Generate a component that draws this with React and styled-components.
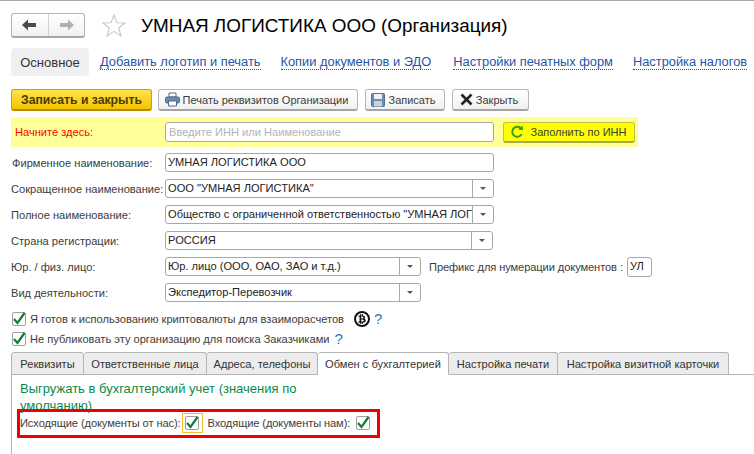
import React from "react";
import styled, { createGlobalStyle } from "styled-components";
import { FaBtc } from "react-icons/fa";

const Global = createGlobalStyle`
  html, body { margin: 0; padding: 0; background: #fff; }
  body { width: 754px; height: 454px; overflow: hidden; font-family: "Liberation Sans", Arial, sans-serif; font-size: 11.1px; color: #3c3c3c; }
  * { box-sizing: border-box; }
`;

const Page = styled.div`
  position: relative;
  width: 754px;
  height: 454px;
  overflow: hidden;
  border-top: 1px solid #a8a8a8;
  padding: 12px 0 0 11px;
`;

const Header = styled.header`
  display: flex;
  align-items: center;
  height: 25px;
`;

const NavGroup = styled.div`
  display: flex;
  width: 74px;
  height: 25px;
  border: 1px solid #b4b4b4;
  border-bottom: 2px solid #a6a6a6;
  border-radius: 3px;
  background: linear-gradient(#fff, #f1f1f1);
`;

const NavButton = styled.div`
  flex: 1;
  display: flex;
  align-items: center;
  justify-content: center;
  & + & { border-left: 1px solid #d2d2d2; }
`;

const StarSlot = styled.div`
  display: flex;
  margin: 0 15px 0 17px;
`;

const Title = styled.h1`
  margin: 0;
  font-size: 18.9px;
  font-weight: 400;
  color: #000;
  white-space: nowrap;
  line-height: 25px;
`;

const Sections = styled.nav`
  display: flex;
  align-items: center;
  margin-top: 10px;
  height: 28px;
  width: 760px;
`;

const CurrentSection = styled.div`
  flex: none;
  width: 78px;
  height: 28px;
  display: flex;
  align-items: center;
  justify-content: center;
  background: #f0f0f0;
  border-radius: 4px;
  font-size: 13px;
  color: #333;
  margin-right: 11px;
`;

const SectionLink = styled.a`
  flex: none;
  font-size: 12.85px;
  color: #1f55a8;
  white-space: nowrap;
  border-bottom: 1px dotted #1f55a8;
  line-height: 14px;
  margin-right: ${(p) => p.$mr || 20}px;
`;

const Toolbar = styled.div`
  display: flex;
  gap: 6px;
  margin-top: 13px;
  height: 22px;
`;

const ToolButton = styled.button`
  display: flex;
  align-items: center;
  justify-content: center;
  gap: 3px;
  width: ${(p) => p.$w}px;
  height: 22px;
  margin-left: ${(p) => p.$ml || 0}px;
  padding: 0 3px 0 0;
  font-family: inherit;
  font-size: 11px;
  color: #3c3c3c;
  border: 1px solid #b8b8b8;
  border-bottom: 2px solid #a4a4a4;
  border-radius: 3px;
  background: linear-gradient(#fff, #f1f1f1);
  white-space: nowrap;
`;

const PrimaryButton = styled(ToolButton)`
  padding: 0;
  font-size: 12.2px;
  font-weight: 700;
  color: #4a3c00;
  border-color: #c9a400;
  border-bottom-color: #b08e00;
  background: linear-gradient(#ffe24d, #f5c400);
`;

const StartBand = styled.div`
  display: flex;
  align-items: center;
  width: 627px;
  height: 30px;
  margin-top: 6px;
  padding-left: 4px;
  background: #ffff99;
`;

const StartLabel = styled.span`
  width: 150px;
  color: #ff0000;
`;

const Hint = styled.div`
  display: flex;
  align-items: center;
  width: 329px;
  height: 20px;
  padding-left: 3px;
  background: #fff;
  border: 1px solid #a8a8a8;
  border-radius: 3px;
  color: #b4b4b4;
`;

const FillButton = styled.button`
  display: flex;
  align-items: center;
  justify-content: center;
  gap: 7px;
  width: 132px;
  height: 21px;
  margin-left: 9px;
  padding: 0 2px 0 0;
  font-family: inherit;
  font-size: 11px;
  color: #3c3c3c;
  background: #ffff00;
  border: 1px solid #c2c24a;
  border-bottom: 2px solid #a8a850;
  border-radius: 3px;
`;

const Form = styled.div`
  display: flex;
  flex-direction: column;
  gap: 7px;
  margin-top: 6px;
`;

const Row = styled.div`
  display: flex;
  align-items: center;
  height: 19px;
`;

const Label = styled.label`
  flex: none;
  width: 154px;
  white-space: nowrap;
  padding-left: ${(p) => p.$inset || 0}px;
`;

const Field = styled.div`
  display: flex;
  flex: none;
  width: ${(p) => p.$w}px;
  height: ${(p) => p.$h || 19}px;
  border: 1px solid #a8a8a8;
  border-radius: 3px;
  background: #fff;
  overflow: hidden;
`;

const FieldText = styled.div`
  flex: 1;
  min-width: 0;
  padding-left: 2px;
  line-height: 17px;
  color: #222;
  white-space: nowrap;
  overflow: hidden;
`;

const Drop = styled.div`
  flex: none;
  width: 21px;
  display: flex;
  align-items: center;
  justify-content: center;
  border-left: 1px solid #a8a8a8;
  &::after {
    content: "";
    border-left: 3px solid transparent;
    border-right: 3px solid transparent;
    border-top: 3px solid #555;
  }
`;

const PrefixLabel = styled.span`
  margin-left: 8px;
  margin-right: 4px;
  white-space: nowrap;
  letter-spacing: -0.09px;
`;

const Checks = styled.div`
  display: flex;
  flex-direction: column;
  gap: 5px;
  margin-top: 9px;
`;

const CheckRow = styled.div`
  display: flex;
  align-items: center;
  height: 15px;
  padding-left: 1px;
`;

const CheckText = styled.span`
  margin-left: 4px;
  white-space: nowrap;
`;

const Box = styled.span`
  display: flex;
  width: 14px;
  height: 14px;
  flex: none;
  align-items: center;
  justify-content: center;
  border: 1px solid #a0a0a0;
  border-radius: 2px;
  background: #fff;
  & svg { flex: none; }
`;

const Coin = styled.span`
  display: flex;
  align-items: center;
  justify-content: center;
  width: 16px;
  height: 16px;
  margin-left: 10px;
  border: 2px solid #111;
  border-radius: 50%;
  color: #111;
  font-size: 10px;
`;

const Help = styled.span`
  margin-left: ${(p) => p.$ml}px;
  font-size: 15px;
  color: #1a7fc0;
`;

const TabStrip = styled.div`
  display: flex;
  height: 23px;
  margin-top: 6px;
  border-bottom: 1px solid #b4b4b4;
`;

const Tab = styled.div`
  display: flex;
  flex: none;
  align-items: center;
  justify-content: center;
  width: ${(p) => p.$w}px;
  height: 23px;
  white-space: nowrap;
  border: 1px solid #b4b4b4;
  border-left-width: ${(p) => (p.$first ? 1 : 0)}px;
  border-bottom-color: ${(p) => (p.$active ? "#fff" : "#b4b4b4")};
  border-radius: 3px 3px 0 0;
  background: ${(p) => (p.$active ? "#fff" : "#ececec")};
  color: #333;
`;

const TabBody = styled.section`
  height: 80px;
  padding: 5px 0 0 8px;
  border-left: 1px solid #b4b4b4;
`;

const Heading = styled.h2`
  margin: 0;
  width: 300px;
  height: 28px;
  font-size: 13px;
  line-height: 17px;
  font-weight: 400;
  color: #0a8a4a;
`;

const ExportRow = styled.div`
  display: flex;
  align-items: center;
  height: 20px;
  margin-top: 5px;
`;

const ExportLabel = styled.span`
  white-space: nowrap;
  letter-spacing: -0.1px;
`;

const FocusFrame = styled.span`
  display: flex;
  align-items: center;
  justify-content: center;
  width: 21px;
  height: 20px;
  margin: 0 5px 0 1px;
  border: 1px solid #f2c230;
`;

const ExportBox = styled(Box)`
  margin-left: 6px;
`;

const Highlight = styled.div`
  position: absolute;
  left: 17px;
  top: 408px;
  width: 363px;
  height: 29px;
  border: 3px solid #f00000;
  pointer-events: none;
`;

const Check = () => (
  <svg width="14" height="14" viewBox="0 0 14 14">
    <path d="M2 7 L5.5 11 L12.5 1" fill="none" stroke="#12803c" strokeWidth="2.3" />
  </svg>
);

const ArrowLeft = () => (
  <svg width="15" height="12" viewBox="0 0 15 12">
    <path d="M0 6 L6 0.5 V4 H14 V8 H6 V11.5 Z" fill="#4a4a4a" />
  </svg>
);

const ArrowRight = () => (
  <svg width="15" height="12" viewBox="0 0 15 12">
    <path d="M15 6 L9 0.5 V4 H1 V8 H9 V11.5 Z" fill="#b0b0b0" />
  </svg>
);

const Star = () => (
  <svg width="24" height="23" viewBox="0 0 24 23">
    <path d="M12 1 L15 8.7 L23 9 L16.7 14 L19 22 L12 17.4 L5 22 L7.3 14 L1 9 L9 8.7 Z" fill="#fff" stroke="#c4c8cc" strokeWidth="1.1" />
  </svg>
);

const Printer = () => (
  <svg width="15" height="15" viewBox="0 0 15 15">
    <path d="M4 1 H11 V5 H4 Z" fill="#fff" stroke="#5d6f85" />
    <rect x="0.5" y="5" width="14" height="6" rx="1.5" fill="#6d8bab" stroke="#4d6a88" />
    <path d="M3.5 9 H11.5 V14 H3.5 Z" fill="#fff" stroke="#4d6a88" />
  </svg>
);

const Floppy = () => (
  <svg width="14" height="14" viewBox="0 0 14 14">
    <rect x="0.5" y="0.5" width="13" height="13" rx="1" fill="#6f8db0" stroke="#54708f" />
    <rect x="3" y="1" width="8" height="5" fill="#eef2f6" />
    <rect x="3" y="8" width="8" height="5.5" fill="#c9d3de" />
  </svg>
);

const Cross = () => (
  <svg width="13" height="13" viewBox="0 0 13 13">
    <path d="M1.5 1.5 L11.5 11.5 M11.5 1.5 L1.5 11.5" stroke="#222" strokeWidth="2.6" />
  </svg>
);

const Refresh = () => (
  <svg width="14" height="14" viewBox="0 0 14 14">
    <path d="M11.6 9.2 A5 5 0 1 1 10.5 3" fill="none" stroke="#3c9a1e" strokeWidth="2" />
    <path d="M8 4.6 L13 5.2 L12.6 0.4 Z" fill="#3c9a1e" />
  </svg>
);

const rows = [
  { label: "Фирменное наименование:", value: "УМНАЯ ЛОГИСТИКА ООО", w: 329, inset: 1 },
  { label: "Сокращенное наименование:", value: 'ООО "УМНАЯ ЛОГИСТИКА"', w: 329, drop: true },
  { label: "Полное наименование:", value: 'Общество с ограниченной ответственностью "УМНАЯ ЛОГИСТИКА"', w: 329, drop: true },
  { label: "Страна регистрации:", value: "РОССИЯ", w: 328, drop: true },
  { label: "Юр. / физ. лицо:", value: "Юр. лицо (ООО, ОАО, ЗАО и т.д.)", w: 256, drop: true, prefix: true },
  { label: "Вид деятельности:", value: "Экспедитор-Перевозчик", w: 256, drop: true },
];

const tabs = [
  ["Реквизиты", 73],
  ["Ответственные лица", 123],
  ["Адреса, телефоны", 111],
  ["Обмен с бухгалтерией", 131],
  ["Настройка печати", 109],
  ["Настройка визитной карточки", 171],
];

export default function App() {
  return (
    <>
      <Global />
      <Page>
        <Header>
          <NavGroup>
            <NavButton><ArrowLeft /></NavButton>
            <NavButton><ArrowRight /></NavButton>
          </NavGroup>
          <StarSlot><Star /></StarSlot>
          <Title>УМНАЯ ЛОГИСТИКА ООО (Организация)</Title>
        </Header>

        <Sections>
          <CurrentSection>Основное</CurrentSection>
          <SectionLink>Добавить логотип и печать</SectionLink>
          <SectionLink $mr={22}>Копии документов и ЭДО</SectionLink>
          <SectionLink>Настройки печатных форм</SectionLink>
          <SectionLink>Настройка налогов</SectionLink>
        </Sections>

        <Toolbar>
          <PrimaryButton $w={141}>Записать и закрыть</PrimaryButton>
          <ToolButton $w={200}><Printer />Печать реквизитов Организации</ToolButton>
          <ToolButton $w={80} $ml={1}><Floppy />Записать</ToolButton>
          <ToolButton $w={77} $ml={1}><Cross />Закрыть</ToolButton>
        </Toolbar>

        <StartBand>
          <StartLabel>Начните здесь:</StartLabel>
          <Hint>Введите ИНН или Наименование</Hint>
          <FillButton><Refresh />Заполнить по ИНН</FillButton>
        </StartBand>

        <Form>
          {rows.map((r) => (
            <Row key={r.label}>
              <Label $inset={r.inset}>{r.label}</Label>
              <Field $w={r.w}>
                <FieldText>{r.value}</FieldText>
                {r.drop && <Drop />}
              </Field>
              {r.prefix && (
                <>
                  <PrefixLabel>Префикс для нумерации документов :</PrefixLabel>
                  <Field $w={25} $h={20}><FieldText>УЛ</FieldText></Field>
                </>
              )}
            </Row>
          ))}
        </Form>

        <Checks>
          <CheckRow>
            <Box><Check /></Box>
            <CheckText>Я готов к использованию криптовалюты для взаиморасчетов</CheckText>
            <Coin><FaBtc /></Coin>
            <Help $ml={4}>?</Help>
          </CheckRow>
          <CheckRow>
            <Box><Check /></Box>
            <CheckText>Не публиковать эту организацию для поиска Заказчиками</CheckText>
            <Help $ml={5}>?</Help>
          </CheckRow>
        </Checks>

        <TabStrip>
          {tabs.map(([name, w], i) => (
            <Tab key={name} $w={w} $first={i === 0} $active={i === 3}>{name}</Tab>
          ))}
        </TabStrip>

        <TabBody>
          <Heading>Выгружать в бухгалтерский учет (значения по умолчанию)</Heading>
          <ExportRow>
            <ExportLabel>Исходящие (документы от нас):</ExportLabel>
            <FocusFrame><Box><Check /></Box></FocusFrame>
            <ExportLabel>Входящие (документы нам):</ExportLabel>
            <ExportBox><Check /></ExportBox>
          </ExportRow>
        </TabBody>

        <Highlight />
      </Page>
    </>
  );
}
